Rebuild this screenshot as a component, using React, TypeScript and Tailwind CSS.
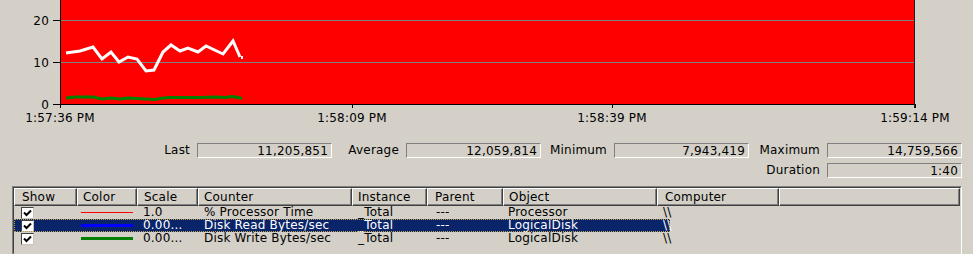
import React from 'react';

const whiteLine: [number, number][] = [
  [66, 53], [80, 51], [93, 47], [102, 59], [111, 52], [119, 62], [128, 57], [137, 59],
  [146, 71], [154, 70], [163, 52], [171, 45], [180, 51], [188, 48], [198, 52], [206, 46],
  [223, 54], [233, 41], [240, 57],
];

const greenLine: [number, number][] = [
  [66, 98], [75, 97], [93, 97], [102, 99], [111, 98], [120, 99], [128, 98], [146, 99],
  [155, 99.5], [163, 98], [171, 97.5], [200, 97.5], [215, 97], [225, 97.5], [233, 96.5], [242, 98.5],
];

const pts = (p: [number, number][]) => p.map(([x, y]) => `${x},${y}`).join(' ');

const xTicks = [
  { x: 60, label: '1:57:36 PM' },
  { x: 352, label: '1:58:09 PM' },
  { x: 612, label: '1:58:39 PM' },
  { x: 915, label: '1:59:14 PM' },
];

function Chart() {
  return (
    <svg width={973} height={128} className="block">
      <rect x={60} y={0} width={855} height={104} fill="#ff0000" />
      <line x1={60} y1={20.5} x2={914} y2={20.5} stroke="#808080" />
      <line x1={60} y1={62.5} x2={914} y2={62.5} stroke="#808080" />
      <polyline points={pts(greenLine)} fill="none" stroke="#008000" strokeWidth={3} strokeLinejoin="round" />
      <polyline points={pts(whiteLine)} fill="none" stroke="#ffffff" strokeWidth={3} strokeLinejoin="miter" />
      <rect x={241} y={56} width={2} height={3} fill="#ffffff" />
      {/* axes */}
      <line x1={60.5} y1={0} x2={60.5} y2={108} stroke="#000" />
      <line x1={53} y1={104.5} x2={915} y2={104.5} stroke="#000" />
      <line x1={914.5} y1={0} x2={914.5} y2={108} stroke="#202020" />
      <line x1={53} y1={20.5} x2={60} y2={20.5} stroke="#000" />
      <line x1={53} y1={62.5} x2={60} y2={62.5} stroke="#000" />
      {xTicks.map((t) => (
        <line key={t.x} x1={t.x + 0.5} y1={104} x2={t.x + 0.5} y2={108} stroke="#000" />
      ))}
      <g fontFamily="DejaVu Sans, sans-serif" fontSize={12} fill="#000">
        <text x={49} y={25} textAnchor="end">20</text>
        <text x={49} y={67} textAnchor="end">10</text>
        <text x={49} y={108.5} textAnchor="end">0</text>
        {xTicks.map((t) => (
          <text key={t.label} x={t.x} y={122} textAnchor="middle">{t.label}</text>
        ))}
      </g>
    </svg>
  );
}

function ValueBox({ value }: { value: string }) {
  return (
    <div className="w-[135px] h-[15px] border border-t-[#808080] border-l-[#808080] border-b-white border-r-white flex items-center justify-end pr-[3px] leading-none">
      {value}
    </div>
  );
}

function Stat({ label, value, w }: { label: string; value: string; w: string }) {
  return (
    <div className={`${w} flex items-center justify-end gap-[7px]`}>
      <span>{label}</span>
      <ValueBox value={value} />
    </div>
  );
}

const cols = 'grid grid-cols-[63px_60px_61px_154px_75px_76px_154px_122px_1fr]';

const headers = [
  { t: 'Show', pl: 'pl-[7px]' },
  { t: 'Color', pl: 'pl-[5px]' },
  { t: 'Scale', pl: 'pl-[6px]' },
  { t: 'Counter', pl: 'pl-[5px]' },
  { t: 'Instance', pl: 'pl-[5px]' },
  { t: 'Parent', pl: 'pl-[7px]' },
  { t: 'Object', pl: 'pl-[5px]' },
  { t: 'Computer', pl: 'pl-[7px]' },
  { t: '', pl: '' },
];

type Row = { color: string; thick: boolean; scale: string; counter: string; object: string; selected?: boolean };

const rows: Row[] = [
  { color: '#ff0000', thick: false, scale: '1.0', counter: '% Processor Time', object: 'Processor' },
  { color: '#0000ff', thick: true, scale: '0.00...', counter: 'Disk Read Bytes/sec', object: 'LogicalDisk', selected: true },
  { color: '#008000', thick: true, scale: '0.00...', counter: 'Disk Write Bytes/sec', object: 'LogicalDisk' },
];

function CheckBox() {
  return (
    <div className="w-[13px] h-[12px] bg-white border border-t-[#404040] border-l-[#404040] border-b-[#c8c4bc] border-r-[#c8c4bc] flex items-center justify-center">
      <svg width={9} height={8} viewBox="0 0 9 8">
        <path d="M1 3.5 L3.5 6 L8 1.5" fill="none" stroke="#000" strokeWidth={2} />
      </svg>
    </div>
  );
}

function CounterRow({ r }: { r: Row }) {
  const sel = r.selected;
  return (
    <div className="flex h-[13px] items-center">
      <div
        className={`flex h-[13px] items-center ${sel ? 'bg-[#0a246a] text-white outline-1 outline-dotted outline-[#b8a050] -outline-offset-1' : 'text-black'}`}
      >
        <div className="w-[63px] pl-[7px] flex items-center"><CheckBox /></div>
        <div className="w-[60px] pl-[4px] flex items-center">
          <div className={`w-[52px] ${r.thick ? 'h-[3px]' : 'h-[1px]'}`} style={{ backgroundColor: r.color }} />
        </div>
        <div className="w-[61px] pl-[6px]">{r.scale}</div>
        <div className="w-[154px] pl-[6px]">{r.counter}</div>
        <div className="w-[75px] pl-[6px]">_Total</div>
        <div className="w-[76px] pl-[9px]">---</div>
        <div className="w-[154px] pl-[5px]">{r.object}</div>
        <div className="w-[13px] pl-[6px]">\\</div>
      </div>
    </div>
  );
}

function CounterTable() {
  return (
    <div className="ml-[12px] w-[950px] h-[69px] border border-t-[#808080] border-l-[#808080] border-b-white border-r-white">
      <div className="h-full border border-t-[#404040] border-l-[#404040] border-b-[#d4d0c8] border-r-[#d4d0c8]">
        <div className={`${cols} h-[18px]`}>
          {headers.map((h, i) => (
            <div
              key={i}
              className={`${h.pl} flex items-center border border-t-white border-l-white border-b-[#404040] border-r-[#404040] shadow-[inset_-1px_-1px_0_#808080]`}
            >
              {h.t}
            </div>
          ))}
        </div>
        {rows.map((r) => (
          <CounterRow key={r.counter} r={r} />
        ))}
      </div>
    </div>
  );
}

export default function App() {
  return (
    <div className="w-[973px] h-[254px] overflow-hidden bg-[#d4d0c8] text-black text-[12px] leading-[13px] tracking-[0.2px] font-['DejaVu_Sans',sans-serif]">
      <Chart />
      <div className="mt-[15px] flex">
        <Stat label="Last" value="11,205,851" w="w-[332px]" />
        <Stat label="Average" value="12,059,814" w="w-[209px]" />
        <Stat label="Minimum" value="7,943,419" w="w-[208px]" />
        <Stat label="Maximum" value="14,759,566" w="w-[213px]" />
      </div>
      <div className="mt-[5px] flex">
        <Stat label="Duration" value="1:40" w="w-[962px]" />
      </div>
      <div className="mt-[8px]">
        <CounterTable />
      </div>
    </div>
  );
}
